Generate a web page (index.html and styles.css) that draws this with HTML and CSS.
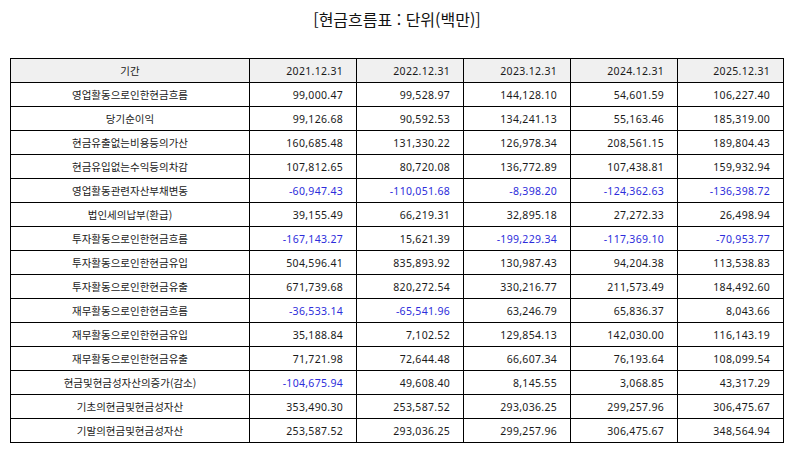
FILE: index.html
```html
<!DOCTYPE html>
<html lang="ko">
<head>
<meta charset="utf-8">
<title>현금흐름표</title>
<link rel="stylesheet" href="styles.css">
</head>
<body>
<div class="page">
  <h1 class="title">[현금흐름표 : 단위(백만)]</h1>
  <table class="fin">
    <colgroup>
      <col class="c-label"><col class="c-num"><col class="c-num"><col class="c-num"><col class="c-num"><col class="c-num-last">
    </colgroup>
    <thead>
      <tr class="head">
        <th class="label">기간</th>
        <th>2021.12.31</th><th>2022.12.31</th><th>2023.12.31</th><th>2024.12.31</th><th>2025.12.31</th>
      </tr>
    </thead>
    <tbody>
      <tr><td class="label">영업활동으로인한현금흐름</td><td>99,000.47</td><td>99,528.97</td><td>144,128.10</td><td>54,601.59</td><td>106,227.40</td></tr>
      <tr><td class="label">당기순이익</td><td>99,126.68</td><td>90,592.53</td><td>134,241.13</td><td>55,163.46</td><td>185,319.00</td></tr>
      <tr><td class="label">현금유출없는비용등의가산</td><td>160,685.48</td><td>131,330.22</td><td>126,978.34</td><td>208,561.15</td><td>189,804.43</td></tr>
      <tr><td class="label">현금유입없는수익등의차감</td><td>107,812.65</td><td>80,720.08</td><td>136,772.89</td><td>107,438.81</td><td>159,932.94</td></tr>
      <tr><td class="label">영업활동관련자산부채변동</td><td class="neg">-60,947.43</td><td class="neg">-110,051.68</td><td class="neg">-8,398.20</td><td class="neg">-124,362.63</td><td class="neg">-136,398.72</td></tr>
      <tr><td class="label">법인세의납부(환급)</td><td>39,155.49</td><td>66,219.31</td><td>32,895.18</td><td>27,272.33</td><td>26,498.94</td></tr>
      <tr><td class="label">투자활동으로인한현금흐름</td><td class="neg">-167,143.27</td><td>15,621.39</td><td class="neg">-199,229.34</td><td class="neg">-117,369.10</td><td class="neg">-70,953.77</td></tr>
      <tr><td class="label">투자활동으로인한현금유입</td><td>504,596.41</td><td>835,893.92</td><td>130,987.43</td><td>94,204.38</td><td>113,538.83</td></tr>
      <tr><td class="label">투자활동으로인한현금유출</td><td>671,739.68</td><td>820,272.54</td><td>330,216.77</td><td>211,573.49</td><td>184,492.60</td></tr>
      <tr><td class="label">재무활동으로인한현금흐름</td><td class="neg">-36,533.14</td><td class="neg">-65,541.96</td><td>63,246.79</td><td>65,836.37</td><td>8,043.66</td></tr>
      <tr><td class="label">재무활동으로인한현금유입</td><td>35,188.84</td><td>7,102.52</td><td>129,854.13</td><td>142,030.00</td><td>116,143.19</td></tr>
      <tr><td class="label">재무활동으로인한현금유출</td><td>71,721.98</td><td>72,644.48</td><td>66,607.34</td><td>76,193.64</td><td>108,099.54</td></tr>
      <tr><td class="label">현금및현금성자산의증가(감소)</td><td class="neg">-104,675.94</td><td>49,608.40</td><td>8,145.55</td><td>3,068.85</td><td>43,317.29</td></tr>
      <tr><td class="label">기초의현금및현금성자산</td><td>353,490.30</td><td>253,587.52</td><td>293,036.25</td><td>299,257.96</td><td>306,475.67</td></tr>
      <tr><td class="label">기말의현금및현금성자산</td><td>253,587.52</td><td>293,036.25</td><td>299,257.96</td><td>306,475.67</td><td>348,564.94</td></tr>
    </tbody>
  </table>
</div>
</body>
</html>
```

FILE: styles.css
```css
html, body {
  margin: 0;
  padding: 0;
  background: #ffffff;
}

.page {
  width: 794px;
  height: 452px;
  padding: 8px 10px 0 10px;
  box-sizing: border-box;
  font-family: "Noto Sans", "Noto Sans CJK KR", sans-serif;
  color: #1a1a1a;
}

.title {
  margin: 0;
  height: 50px;
  font-family: "Noto Sans CJK KR", "Noto Sans", sans-serif;
  font-size: 16px;
  font-weight: normal;
  line-height: 22px;
  text-align: center;
  color: #111;
}

.fin {
  width: 774px;
  border-collapse: collapse;
  table-layout: fixed;
  font-size: 10.5px;
}

.c-label { width: 239px; }
.c-num { width: 107px; }
.c-num-last { width: 106px; }

.fin th,
.fin td {
  border: 1px solid #000;
  height: 23px;
  padding: 0 13px 0 4px;
  text-align: right;
  font-weight: normal;
  white-space: nowrap;
  letter-spacing: 0.3px;
  line-height: 14px;
}

.fin tr { height: 24px; }

.fin .label {
  text-align: center;
  padding: 0 4px;
  letter-spacing: 0;
  font-family: "Noto Sans CJK KR", "Noto Sans", sans-serif;
  font-size: 10.5px;
}

.head th {
  background: #f0f0f0;
}

.neg {
  color: #2d2ddb;
}
```
